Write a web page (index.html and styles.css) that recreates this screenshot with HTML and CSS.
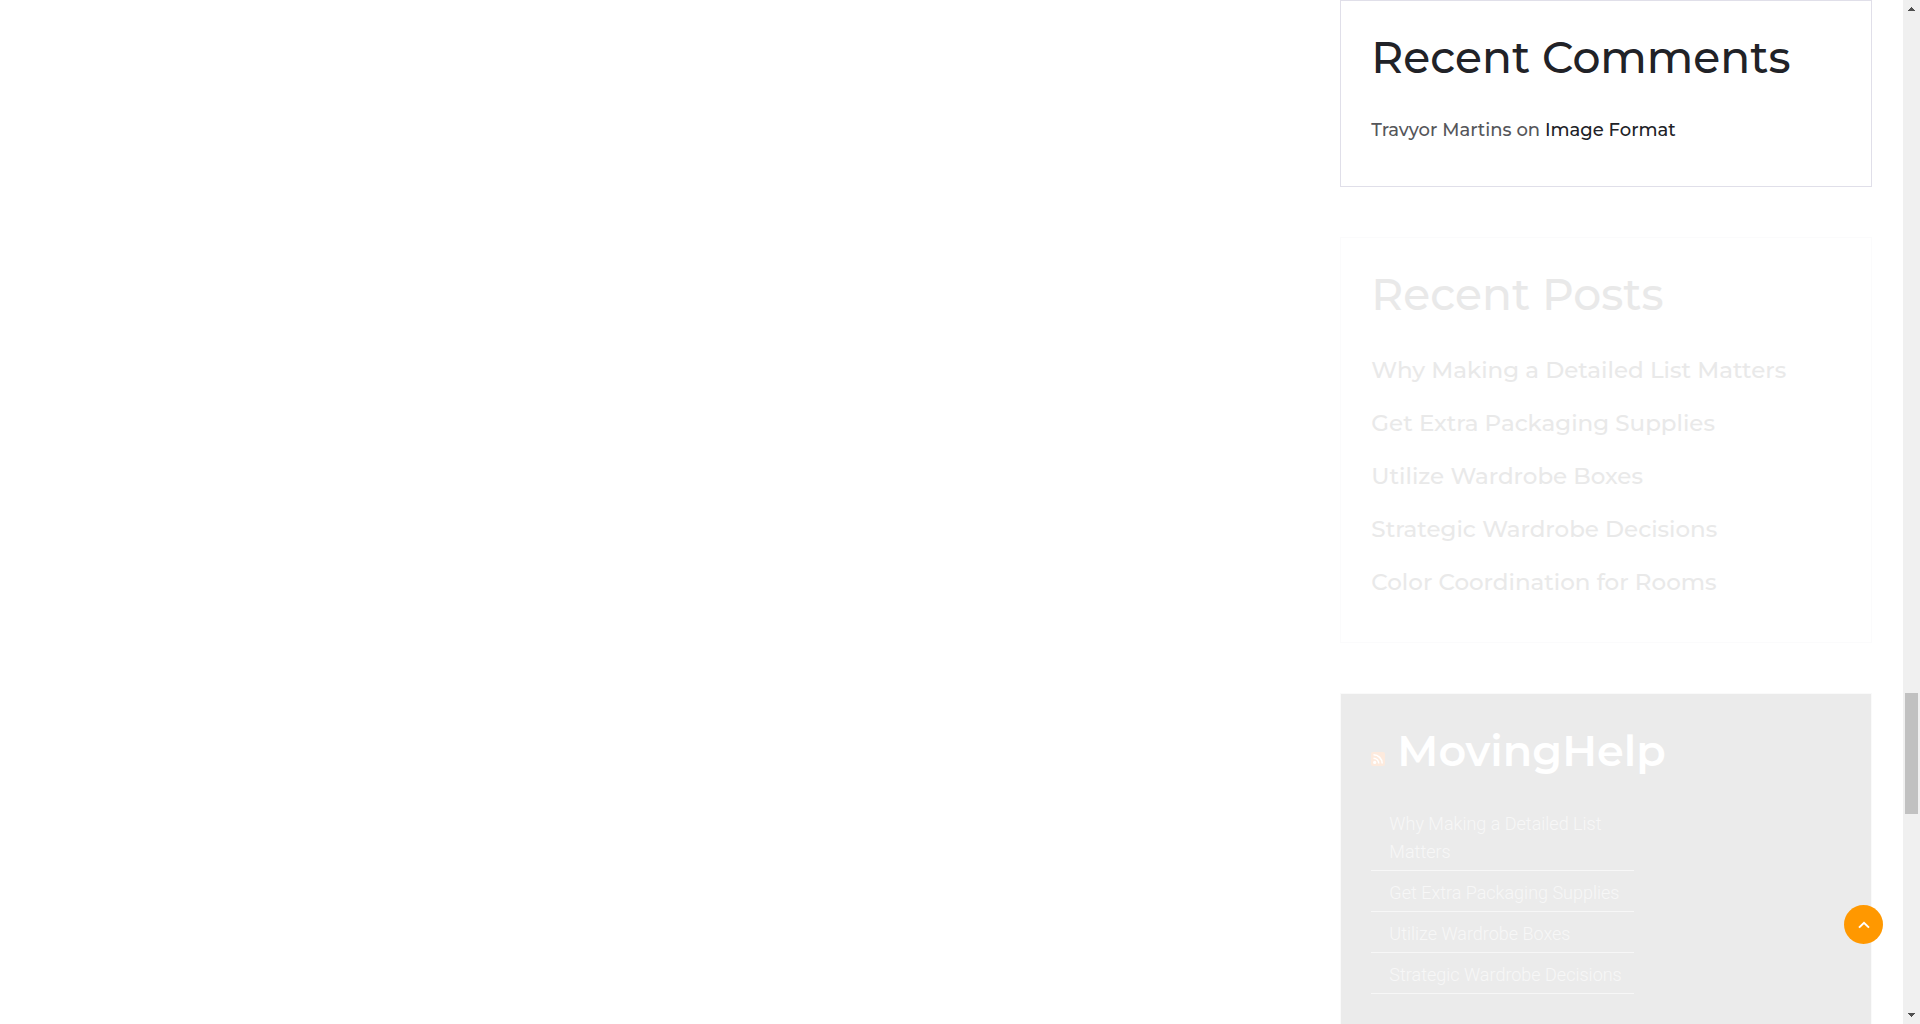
FILE: index.html
```html
<!DOCTYPE html>
<html lang="en">
<head>
<meta charset="utf-8">
<meta name="viewport" content="width=device-width, initial-scale=1">
<title>MovingHelp</title>
<link rel="stylesheet" href="styles.css">
</head>
<body>
<div class="viewport">
  <div class="page">
    <main class="content"></main>
    <aside class="sidebar">
      <section class="widget">
        <h2 class="widget-title">Recent Comments</h2>
        <p class="comment"><span>Travyor Martins</span> on <a href="#image-format">Image Format</a></p>
      </section>
      <section class="widget widget-faded">
        <h2 class="widget-title">Recent Posts</h2>
        <ul class="posts">
          <li><a href="#list">Why Making a Detailed List Matters</a></li>
          <li><a href="#supplies">Get Extra Packaging Supplies</a></li>
          <li><a href="#boxes">Utilize Wardrobe Boxes</a></li>
          <li><a href="#decisions">Strategic Wardrobe Decisions</a></li>
          <li><a href="#rooms">Color Coordination for Rooms</a></li>
        </ul>
      </section>
      <section class="widget widget-feed">
        <h2 class="widget-title feed-title">
          <a href="#feed" aria-label="RSS feed"><svg class="rss" viewBox="0 0 14 14" aria-hidden="true"><rect width="14" height="14" rx="2" fill="#fdeadd"/><circle cx="3.7" cy="10.4" r="1.6" fill="#fff"/><path d="M2.5 6.2a5.3 5.3 0 0 1 5.3 5.3M2.5 2.8a8.7 8.7 0 0 1 8.7 8.7" fill="none" stroke="#fff" stroke-width="1.5"/></svg></a>
          <a href="#movinghelp">MovingHelp</a>
        </h2>
        <ul class="feed">
          <li><a href="#list">Why Making a Detailed List Matters</a></li>
          <li><a href="#supplies">Get Extra Packaging Supplies</a></li>
          <li><a href="#boxes">Utilize Wardrobe Boxes</a></li>
          <li><a href="#decisions">Strategic Wardrobe Decisions</a></li>
        </ul>
      </section>
    </aside>
  </div>
  <div class="scrollbar" aria-hidden="true">
    <svg class="arrow" viewBox="0 0 17 17"><path d="M8 7h1v1h1v1h1v1h1v1H5v-1h1V9h1V8h1z" fill="#505050"/></svg>
    <div class="track"><div class="thumb"></div></div>
    <svg class="arrow" viewBox="0 0 17 17"><path d="M5 6h7v1h-1v1h-1v1H9v1H8V9H7V8H6V7H5z" fill="#505050"/></svg>
  </div>
</div>
<button class="to-top" type="button" aria-label="Back to top"><svg viewBox="0 0 12 8" aria-hidden="true"><path d="M1 6.6 6 1.8l5 4.8" fill="none" stroke="#fff" stroke-width="2"/></svg></button>
</body>
</html>
```
FILE: styles.css
```css
* { box-sizing: border-box; }
body {
  margin: 0;
  background: #fff;
  color: #55565a;
  font-family: Montserrat, "DejaVu Sans", sans-serif;
  font-weight: 500;
}
a { color: inherit; text-decoration: none; }
ul { list-style: none; margin: 0; padding: 0; }

.viewport { display: flex; height: 100vh; overflow: hidden; }
.page {
  flex: 1;
  display: grid;
  grid-template-columns: minmax(0, 1fr) 28.4%;
  padding-right: 31px;
}
.sidebar { display: flex; flex-direction: column; gap: 50px; min-width: 0; }

.widget { border: 1px solid #e0dfe9; padding: 30px; flex: none; }
.widget-title {
  margin: 0 0 31px;
  color: #212227;
  font-size: 44px;
  font-weight: 500;
  line-height: 52px;
}
.comment { margin: 0; font-size: 18px; line-height: 32px; padding-bottom: 10px; }
.comment a { color: #212227; }

.widget-faded { border-color: #fbfbfc; }
.widget-faded .widget-title { color: #e9e9e9; margin-bottom: 24px; }
.posts { color: #e9e9e9; font-size: 23px; line-height: 53px; padding-bottom: 3px; }

.widget-feed { background: #ebebeb; border-color: #fafafa; min-height: 400px; }
.feed-title {
  display: flex;
  align-items: baseline;
  gap: 12px;
  margin-bottom: 24px;
  color: #fff;
  font-size: 43px;
  font-weight: 600;
  line-height: 54px;
}
.rss { display: block; width: 14px; height: 14px; }
.feed {
  width: 56%;
  color: #f7f7f7;
  font-family: Roboto, sans-serif;
  font-size: 18px;
  font-weight: 300;
  line-height: 28px;
}
.feed li { padding: 8px 0 4px 18px; border-bottom: 1px solid #f7f7f7; }

.scrollbar { width: 17px; background: #f0f0f0; display: flex; flex-direction: column; }
.arrow { width: 17px; height: 17px; flex: none; }
.track { flex: 1; display: grid; grid-template-rows: 676fr 121fr 193fr; padding: 0 2px; }
.thumb { grid-row: 2; background: #c1c1c1; }

.to-top {
  position: fixed;
  right: 37px;
  bottom: 80px;
  width: 39px;
  height: 39px;
  padding: 0;
  border: 0;
  border-radius: 50%;
  background: #ff9800;
  display: grid;
  place-items: center;
}
.to-top svg { width: 12px; height: 8px; }
```
